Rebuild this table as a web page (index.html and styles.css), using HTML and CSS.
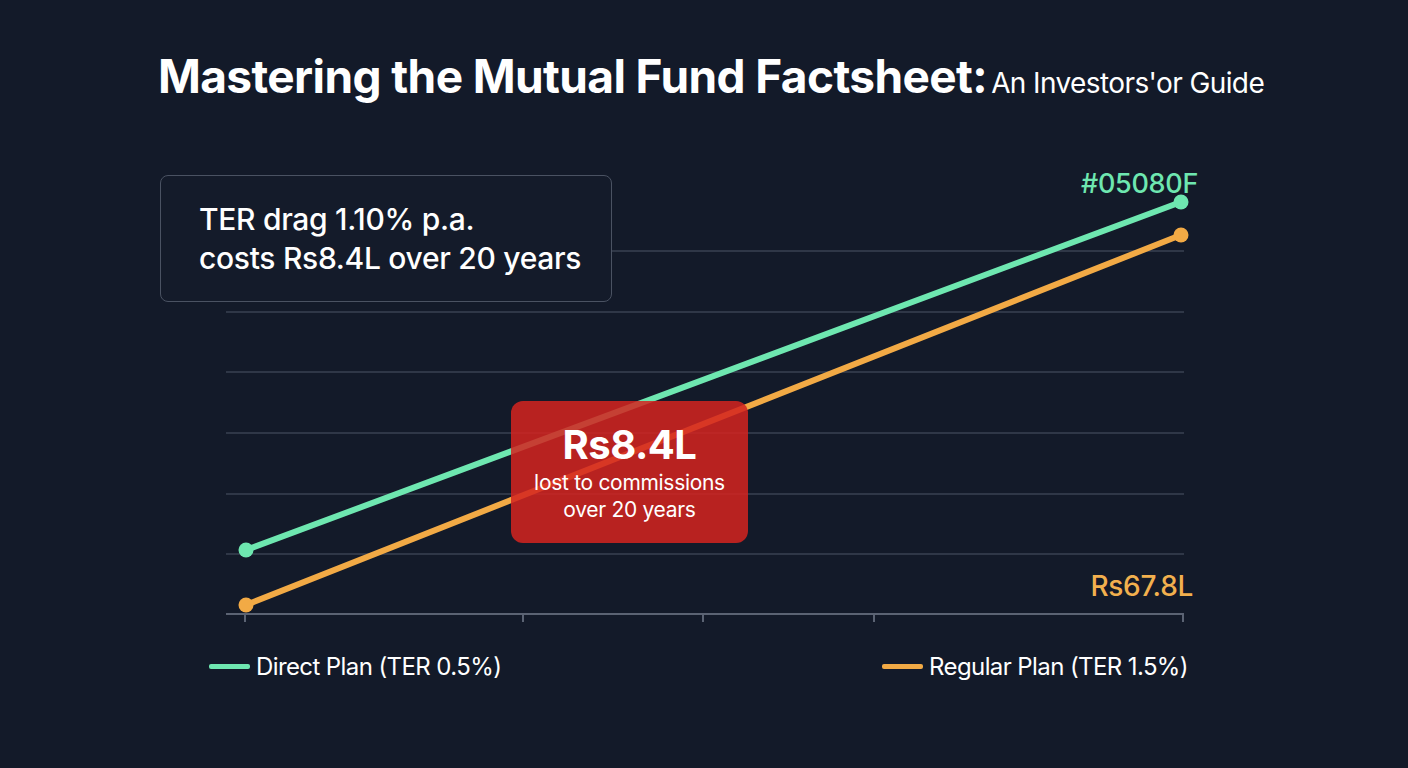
FILE: index.html
```html
<!DOCTYPE html>
<html>
<head>
<meta charset="utf-8">
<link rel="stylesheet" href="styles.css">
</head>
<body>
<div class="page">
  <header class="title">
    <h1 class="main">Mastering the Mutual Fund Factsheet:</h1>
    <span class="sub">An Investors'or Guide</span>
  </header>
  <div class="chart">
    <svg class="plot" width="1408" height="480" viewBox="0 0 1408 480">
      <g stroke="#3a4252" stroke-width="1.5">
        <line x1="226" y1="101" x2="1184" y2="101"/>
        <line x1="226" y1="162" x2="1184" y2="162"/>
        <line x1="226" y1="222" x2="1184" y2="222"/>
        <line x1="226" y1="283" x2="1184" y2="283"/>
        <line x1="226" y1="344" x2="1184" y2="344"/>
        <line x1="226" y1="404" x2="1184" y2="404"/>
      </g>
      <g stroke="#5b6373" stroke-width="2">
        <line x1="226" y1="464" x2="1184" y2="464"/>
        <line x1="245" y1="464" x2="245" y2="472"/>
        <line x1="523" y1="464" x2="523" y2="472"/>
        <line x1="703" y1="464" x2="703" y2="472"/>
        <line x1="874" y1="464" x2="874" y2="472"/>
        <line x1="1183" y1="464" x2="1183" y2="472"/>
      </g>
      <line x1="246" y1="400" x2="1181" y2="52" stroke="#6ee7b0" stroke-width="6" stroke-linecap="round"/>
      <line x1="246" y1="455" x2="1181" y2="85" stroke="#f2aa45" stroke-width="6" stroke-linecap="round"/>
      <circle cx="246" cy="400" r="7.5" fill="#6ee7b0"/>
      <circle cx="1181" cy="52" r="7.5" fill="#6ee7b0"/>
      <circle cx="246" cy="455" r="7.5" fill="#f2aa45"/>
      <circle cx="1181" cy="85" r="7.5" fill="#f2aa45"/>
    </svg>
    <div class="callout">
      <p>TER drag 1.10% p.a.<br>costs Rs8.4L over 20 years</p>
    </div>
    <div class="loss">
      <div class="loss-big">Rs8.4L</div>
      <div class="loss-small">lost to commissions<br>over 20 years</div>
    </div>
    <div class="end-label green">#05080F</div>
    <div class="end-label orange">Rs67.8L</div>
  </div>
  <footer class="legend">
    <div class="item"><span class="swatch green-bg"></span>Direct Plan (TER 0.5%)</div>
    <div class="item"><span class="swatch orange-bg"></span>Regular Plan (TER 1.5%)</div>
  </footer>
</div>
</body>
</html>
```

FILE: styles.css
```css
html, body {
  margin: 0;
  padding: 0;
  background: #131a29;
}
.page {
  width: 1408px;
  height: 768px;
  background: #131a29;
  font-family: Inter, "Liberation Sans", sans-serif;
  color: #ffffff;
  overflow: hidden;
}
.title {
  display: flex;
  align-items: baseline;
  gap: 4px;
  padding: 48px 0 0 158px;
  height: 100px;
  box-sizing: border-box;
}
.main {
  margin: 0;
  font-size: 46px;
  font-weight: 700;
  letter-spacing: -0.6px;
  line-height: 56px;
}
.sub {
  font-size: 28px;
  font-weight: 400;
  letter-spacing: -0.6px;
}
.chart {
  position: relative;
  height: 480px;
  margin-top: 50px;
}
.plot {
  position: absolute;
  left: 0;
  top: 0;
  display: block;
}
.callout {
  position: absolute;
  left: 160px;
  top: 25px;
  width: 452px;
  height: 127px;
  box-sizing: border-box;
  border: 1.5px solid #4a5262;
  border-radius: 8px;
  background: #141b2a;
  display: flex;
  align-items: center;
  padding-left: 38px;
}
.callout p {
  margin: 0;
  font-size: 30px;
  line-height: 39px;
  font-weight: 500;
  letter-spacing: -0.3px;
}
.loss {
  position: absolute;
  left: 511px;
  top: 251px;
  width: 237px;
  height: 142px;
  border-radius: 12px;
  background: rgba(212, 36, 32, 0.86);
  display: flex;
  flex-direction: column;
  align-items: center;
  justify-content: center;
  text-align: center;
}
.loss-big {
  font-size: 40px;
  font-weight: 700;
  line-height: 48px;
  letter-spacing: -0.5px;
}
.loss-small {
  font-size: 21px;
  line-height: 27px;
  letter-spacing: -0.3px;
}
.end-label {
  position: absolute;
  font-size: 27px;
  font-weight: 500;
  letter-spacing: -0.3px;
  line-height: 32px;
}
.end-label.green {
  color: #6ee7b0;
  right: 210px;
  top: 18px;
}
.end-label.orange {
  color: #f2b04e;
  font-size: 28px;
  right: 215px;
  top: 420px;
}
.legend {
  display: flex;
  justify-content: space-between;
  padding: 22px 220px 0 209px;
}
.item {
  display: flex;
  align-items: center;
  gap: 6px;
  font-size: 24px;
  letter-spacing: -0.6px;
}
.swatch {
  display: block;
  width: 41px;
  height: 5px;
  border-radius: 2px;
}
.green-bg { background: #6ee7b0; }
.orange-bg { background: #f2aa45; }
```
